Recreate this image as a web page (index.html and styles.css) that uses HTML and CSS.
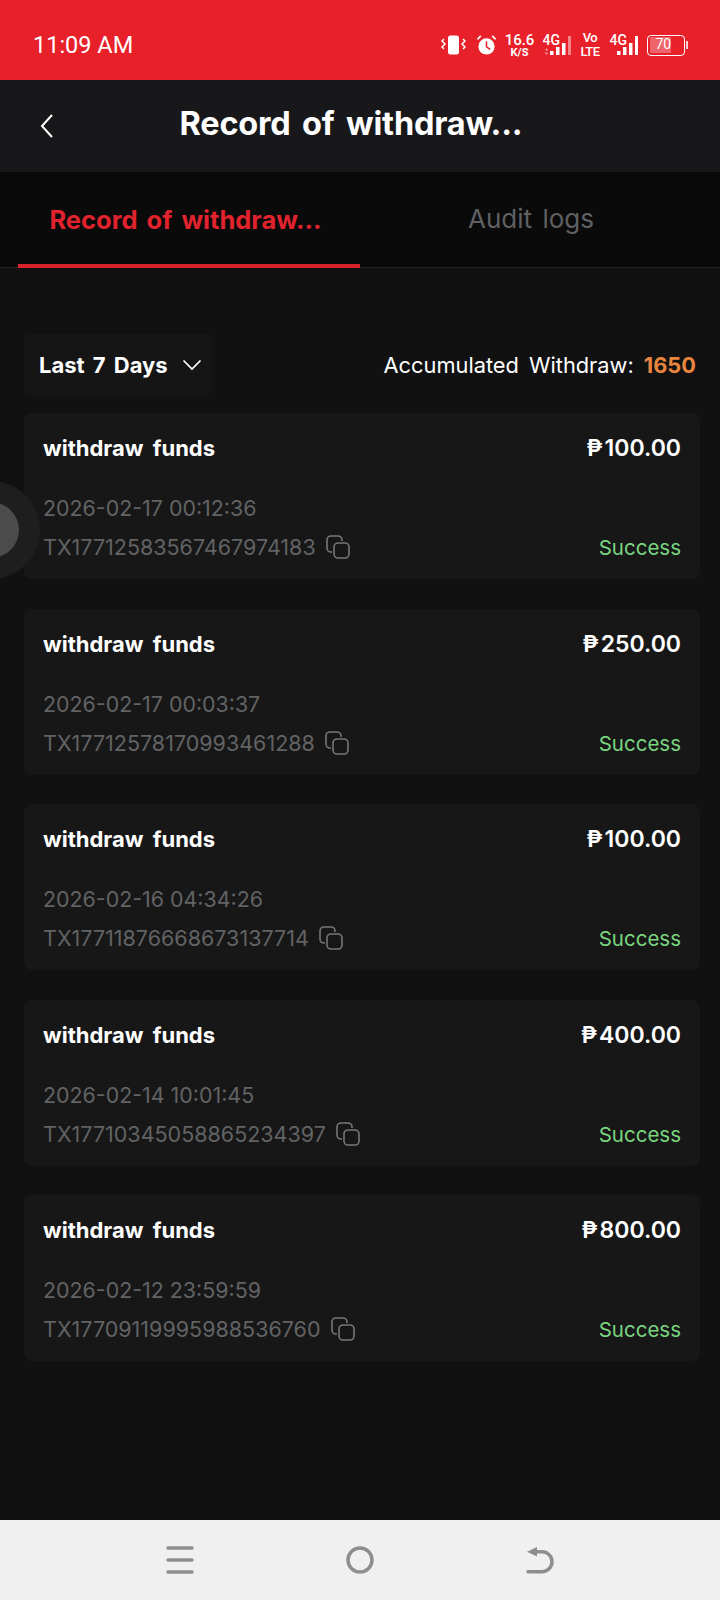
FILE: index.html
```html
<!DOCTYPE html>
<html lang="en">
<head>
  <meta charset="UTF-8">
  <meta name="viewport" content="width=device-width, initial-scale=1.0">
  <title>Record of withdraw</title>
  <link rel="stylesheet" href="styles.css">
</head>
<body>
  <div class="statusbar">
    <span class="clock">11:09 AM</span>
    <div class="status-icons">
      <svg width="25" height="20" viewBox="0 0 25 20"><rect x="7" y="0.500" width="11" height="19" rx="2.500" fill="#fff"/><path d="M3 4L1 6l3 3-3 3 2 2M22 4l2 2-3 3 3 3-2 2" fill="none" stroke="#fff" stroke-width="1.500"/></svg>
      <svg width="21" height="22" viewBox="0 0 22 22"><circle cx="11" cy="12.500" r="8.500" fill="#fff"/><path d="M11 7v6l4 2.500" fill="none" stroke="#e8202a" stroke-width="1.600"/><path d="M1.500 5L5 1.500M20.500 5L17 1.500" stroke="#fff" stroke-width="1.800"/></svg>
      <div class="speed"><b>16.6</b><i>K/S</i></div>
      <div class="net"><span>4G</span><svg width="28" height="20" viewBox="0 0 28 20"><path d="M3.500 12l2 2.500h-4zM3.500 19l2-2.500h-4z" fill="#fff" opacity=".45"/><rect x="7" y="15" width="3.500" height="4" fill="#fff"/><rect x="13" y="11" width="3.500" height="8" fill="#fff"/><rect x="19" y="7" width="3.500" height="12" fill="#fff"/><rect x="25" y="0" width="3" height="19" fill="#fff" opacity=".45"/></svg></div>
      <div class="volte"><span>Vo</span><span>LTE</span></div>
      <div class="net"><span>4G</span><svg width="28" height="20" viewBox="0 0 28 20"><rect x="7" y="15" width="3.500" height="4" fill="#fff"/><rect x="13" y="11" width="3.500" height="8" fill="#fff"/><rect x="19" y="7" width="3.500" height="12" fill="#fff"/><rect x="25" y="0" width="3" height="19" fill="#fff"/></svg></div>
      <div class="battery"><div class="battery-body"><span class="battery-level">70</span></div><div class="battery-tip"></div></div>
    </div>
  </div>

  <header class="topbar">
    <svg width="16" height="26" viewBox="0 0 16 26"><path d="M13 2L3 13l10 11" fill="none" stroke="#fff" stroke-width="2"/></svg>
    <h1>Record of withdraw...</h1>
  </header>

  <nav class="tabs">
    <a class="tab active" href="#"><span>Record of withdraw...</span></a>
    <a class="tab" href="#"><span>Audit logs</span></a>
  </nav>

  <main class="content">
    <div class="filter-row">
      <div class="dropdown">
        <span>Last 7 Days</span>
        <svg width="20" height="12" viewBox="0 0 20 12"><path d="M1.500 1.500L10 10l8.500-8.500" fill="none" stroke="#fff" stroke-width="1.700"/></svg>
      </div>
      <div class="total">Accumulated Withdraw: <b>1650</b></div>
    </div>

    <div class="record">
      <div class="record-top"><span class="record-name">withdraw funds</span><span class="amount"><span class="peso">₱</span>100.00</span></div>
      <div class="record-date">2026-02-17 00:12:36</div>
      <div class="record-bottom">
        <div class="txid">TX17712583567467974183<svg width="26" height="26" viewBox="0 0 26 26"><path d="M7 18H6a4 4 0 0 1-4-4V6a4 4 0 0 1 4-4h7a4 4 0 0 1 4 4v1" fill="none" stroke="#777" stroke-width="1.600"/><rect x="9" y="9" width="15" height="15" rx="4" fill="none" stroke="#777" stroke-width="1.600"/></svg></div>
        <span class="state">Success</span>
      </div>
    </div>

    <div class="record">
      <div class="record-top"><span class="record-name">withdraw funds</span><span class="amount"><span class="peso">₱</span>250.00</span></div>
      <div class="record-date">2026-02-17 00:03:37</div>
      <div class="record-bottom">
        <div class="txid">TX17712578170993461288<svg width="26" height="26" viewBox="0 0 26 26"><path d="M7 18H6a4 4 0 0 1-4-4V6a4 4 0 0 1 4-4h7a4 4 0 0 1 4 4v1" fill="none" stroke="#777" stroke-width="1.600"/><rect x="9" y="9" width="15" height="15" rx="4" fill="none" stroke="#777" stroke-width="1.600"/></svg></div>
        <span class="state">Success</span>
      </div>
    </div>

    <div class="record">
      <div class="record-top"><span class="record-name">withdraw funds</span><span class="amount"><span class="peso">₱</span>100.00</span></div>
      <div class="record-date">2026-02-16 04:34:26</div>
      <div class="record-bottom">
        <div class="txid">TX17711876668673137714<svg width="26" height="26" viewBox="0 0 26 26"><path d="M7 18H6a4 4 0 0 1-4-4V6a4 4 0 0 1 4-4h7a4 4 0 0 1 4 4v1" fill="none" stroke="#777" stroke-width="1.600"/><rect x="9" y="9" width="15" height="15" rx="4" fill="none" stroke="#777" stroke-width="1.600"/></svg></div>
        <span class="state">Success</span>
      </div>
    </div>

    <div class="record">
      <div class="record-top"><span class="record-name">withdraw funds</span><span class="amount"><span class="peso">₱</span>400.00</span></div>
      <div class="record-date">2026-02-14 10:01:45</div>
      <div class="record-bottom">
        <div class="txid">TX17710345058865234397<svg width="26" height="26" viewBox="0 0 26 26"><path d="M7 18H6a4 4 0 0 1-4-4V6a4 4 0 0 1 4-4h7a4 4 0 0 1 4 4v1" fill="none" stroke="#777" stroke-width="1.600"/><rect x="9" y="9" width="15" height="15" rx="4" fill="none" stroke="#777" stroke-width="1.600"/></svg></div>
        <span class="state">Success</span>
      </div>
    </div>

    <div class="record">
      <div class="record-top"><span class="record-name">withdraw funds</span><span class="amount"><span class="peso">₱</span>800.00</span></div>
      <div class="record-date">2026-02-12 23:59:59</div>
      <div class="record-bottom">
        <div class="txid">TX17709119995988536760<svg width="26" height="26" viewBox="0 0 26 26"><path d="M7 18H6a4 4 0 0 1-4-4V6a4 4 0 0 1 4-4h7a4 4 0 0 1 4 4v1" fill="none" stroke="#777" stroke-width="1.600"/><rect x="9" y="9" width="15" height="15" rx="4" fill="none" stroke="#777" stroke-width="1.600"/></svg></div>
        <span class="state">Success</span>
      </div>
    </div>

    <div class="float-ball"><div class="float-ball-inner"></div></div>
  </main>

  <footer class="navbar">
    <svg width="28" height="30" viewBox="0 0 28 30"><path d="M2 3h24M2 15h24M2 27h24" stroke="#8e8e8e" stroke-width="3.500" stroke-linecap="round"/></svg>
    <svg width="30" height="30" viewBox="0 0 30 30"><circle cx="15" cy="15" r="12" fill="none" stroke="#8e8e8e" stroke-width="3.500"/></svg>
    <svg width="28" height="30" viewBox="0 0 28 30"><path d="M2 26.700h14a10 10 0 0 0 0-20H6" fill="none" stroke="#8e8e8e" stroke-width="3.500" stroke-linecap="round"/><path d="M1 6.700L11 2v9.500z" fill="#8e8e8e"/></svg>
  </footer>
</body>
</html>
```
FILE: styles.css
```css
* {
  box-sizing: border-box;
}
body {
  margin: 0;
  width: 720px;
  height: 1600px;
  display: flex;
  flex-direction: column;
  overflow: hidden;
  background: #111111;
  color: #fff;
  font-family: Inter, "Noto Sans", sans-serif;
}

/* status bar */
.statusbar {
  height: 80px;
  flex-shrink: 0;
  background: #e8202a;
  display: flex;
  align-items: center;
  justify-content: space-between;
  padding: 10px 32px 0 33px;
  font-family: Roboto, sans-serif;
}
.clock {
  font-size: 23.500px;
}
.status-icons {
  display: flex;
  align-items: center;
  gap: 9.500px;
}
.speed {
  width: 27px;
  display: flex;
  flex-direction: column;
  align-items: center;
  font-size: 15px;
  line-height: 14px;
}
.speed b {
  font-weight: 500;
}
.speed i {
  font-style: normal;
  font-weight: 700;
  font-size: 11px;
  line-height: 11px;
}
.net {
  position: relative;
  width: 28px;
  height: 24px;
}
.net span {
  position: absolute;
  left: 0;
  top: -1px;
  font-size: 14px;
  font-weight: 500;
}
.net svg {
  position: absolute;
  left: 0;
  top: 3px;
}
.volte {
  width: 20px;
  display: flex;
  flex-direction: column;
  align-items: center;
  font-size: 13px;
  line-height: 14px;
  font-weight: 500;
  letter-spacing: -.5px;
}
.battery {
  display: flex;
  align-items: center;
  gap: 1px;
}
.battery-body {
  width: 38px;
  height: 21px;
  border: 1.500px solid #fff;
  border-radius: 4px;
  padding: 1.500px;
  display: flex;
}
.battery-level {
  width: 65%;
  background: rgba(255, 255, 255, .3);
  border-radius: 1px;
  font-size: 14px;
  line-height: 15px;
  padding-left: 6px;
  white-space: nowrap;
}
.battery-tip {
  width: 2px;
  height: 8px;
  background: #fff;
  opacity: .8;
}

/* header */
.topbar {
  height: 92px;
  flex-shrink: 0;
  background: #18181a;
  display: flex;
  align-items: center;
  position: relative;
  padding-left: 39px;
}
.topbar h1 {
  position: absolute;
  left: 0;
  right: 18px;
  top: 24px;
  margin: 0;
  text-align: center;
  font-size: 32.500px;
  font-weight: 700;
  word-spacing: 4px;
  letter-spacing: -.2px;
}

/* tabs */
.tabs {
  height: 96px;
  flex-shrink: 0;
  background: #0a0a0b;
  border-bottom: 1px solid #232425;
  display: flex;
  padding: 0 18px;
}
.tab {
  width: 342px;
  display: flex;
  align-items: center;
  justify-content: center;
  padding-bottom: 2px;
  font-size: 26px;
  color: #5f6062;
  text-decoration: none;
  word-spacing: 3px;
}
.tab.active {
  font-size: 25.500px;
  color: #e1232d;
  font-weight: 700;
  border-bottom: 4px solid #d8232c;
  margin-bottom: -1px;
  padding: 2px 7px 0 0;
}

/* list */
.content {
  flex: 1;
  position: relative;
  padding: 66px 20px 0 24px;
}
.filter-row {
  display: flex;
  align-items: center;
  justify-content: space-between;
  margin-bottom: 17px;
}
.dropdown {
  width: 188px;
  height: 62px;
  background: #151516;
  border-radius: 6px;
  display: flex;
  align-items: center;
  gap: 14px;
  padding-left: 15px;
  font-size: 22px;
  font-weight: 700;
  word-spacing: 3px;
}
.total {
  font-size: 21.800px;
  word-spacing: 4px;
  margin-right: 4px;
}
.total b {
  color: #e8853f;
  font-weight: 700;
}
.record {
  height: 166px;
  background: #171718;
  border-radius: 8px;
  margin-bottom: 29.500px;
  padding: 20px 19px 0 19px;
}
.record-top {
  display: flex;
  justify-content: space-between;
  align-items: center;
  height: 30px;
  font-size: 22px;
  font-weight: 700;
}
.record-name {
  word-spacing: 4px;
}
.amount {
  font-size: 23px;
  font-weight: 600;
}
.peso {
  margin-right: 2px;
}
.record-date {
  margin-top: 30px;
  font-size: 21.400px;
  line-height: 30px;
  color: #626364;
}
.record-bottom {
  display: flex;
  justify-content: space-between;
  align-items: center;
  margin-top: 9px;
  height: 30px;
}
.txid {
  display: flex;
  align-items: center;
  gap: 9px;
  font-size: 21.500px;
  color: #626364;
}
.state {
  font-size: 20.500px;
  color: #7ad67f;
  padding-top: 1px;
}

/* floating button on the left edge */
.float-ball {
  position: absolute;
  left: -58px;
  top: 213px;
  width: 98px;
  height: 98px;
  border-radius: 50%;
  background: #1e1e1f;
  display: flex;
  align-items: center;
  justify-content: center;
}
.float-ball-inner {
  width: 56px;
  height: 56px;
  border-radius: 50%;
  background: #4b4b4c;
}

/* android nav */
.navbar {
  height: 80px;
  flex-shrink: 0;
  background: #f0f0f0;
  display: grid;
  grid-template-columns: repeat(3, 180px);
  justify-content: center;
  justify-items: center;
  align-items: center;
}
```
